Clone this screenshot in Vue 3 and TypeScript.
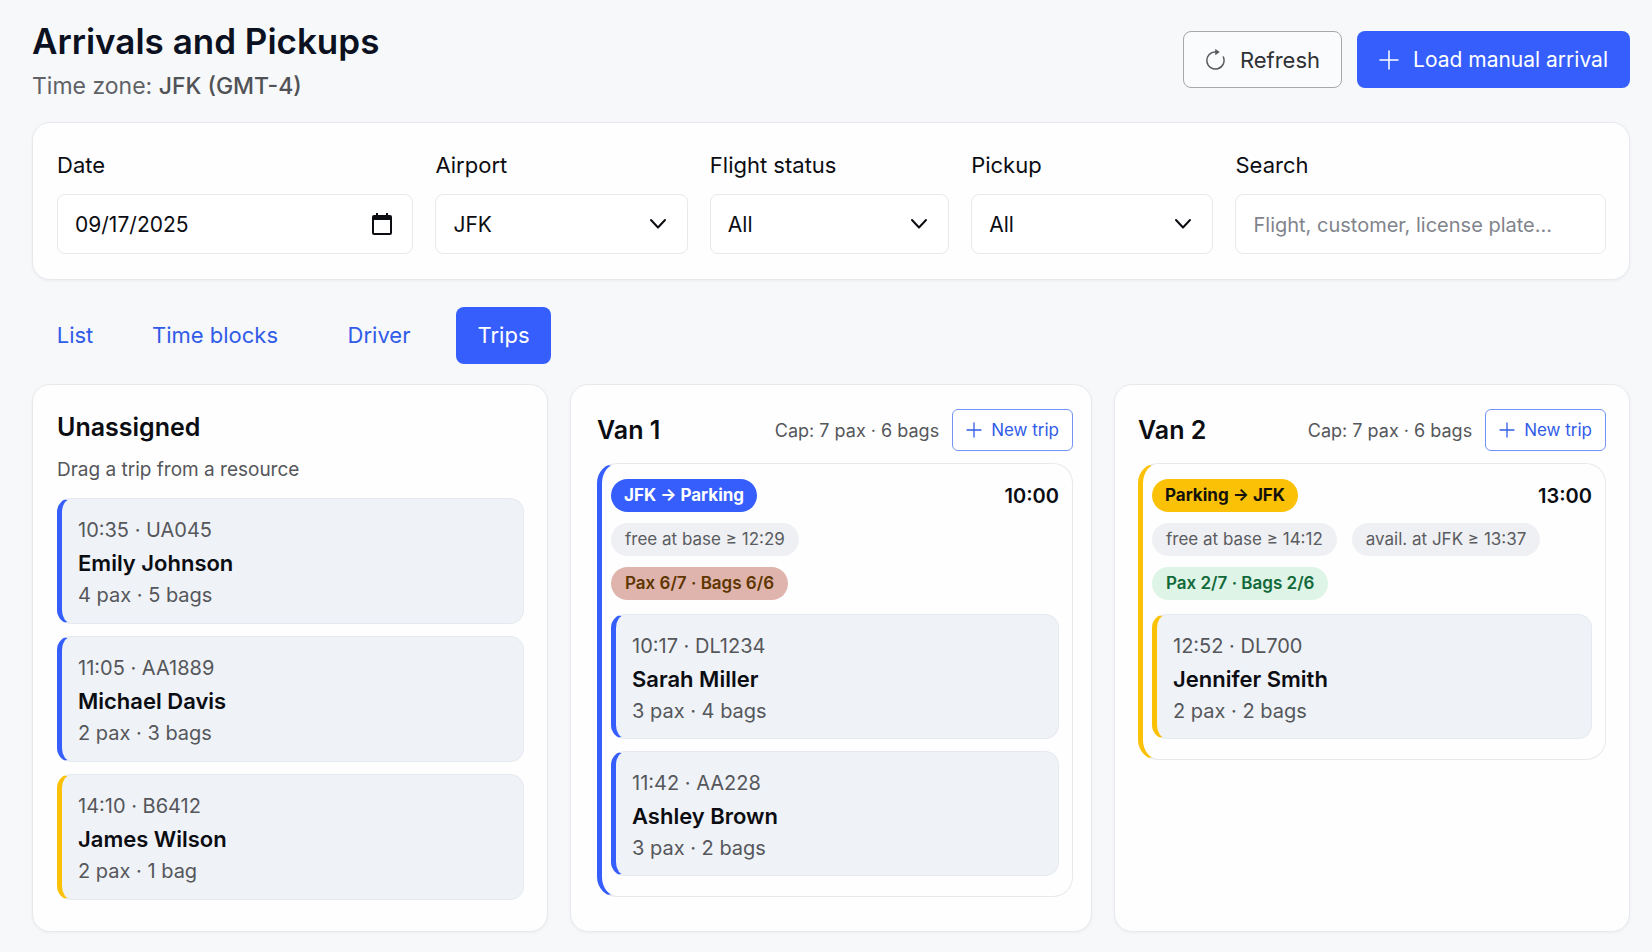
<script setup lang="ts">
import { ref } from 'vue'

type Direction = 'arrival' | 'return'

interface Booking {
  time: string
  flight: string
  customer: string
  pax: number
  bags: number
  direction: Direction
}

interface Trip {
  id: string
  direction: Direction
  route: string
  departs: string
  notes: string[]
  load: string
  full: boolean
  bookings: Booking[]
}

interface Van {
  name: string
  capacity: string
  trips: Trip[]
}

const date = ref('2025-09-17')
const airport = ref('JFK')
const flightStatus = ref('All')
const pickup = ref('All')
const search = ref('')

const tabs = ['List', 'Time blocks', 'Driver', 'Trips']
const activeTab = ref('Trips')

const unassigned: Booking[] = [
  { time: '10:35', flight: 'UA045', customer: 'Emily Johnson', pax: 4, bags: 5, direction: 'arrival' },
  { time: '11:05', flight: 'AA1889', customer: 'Michael Davis', pax: 2, bags: 3, direction: 'arrival' },
  { time: '14:10', flight: 'B6412', customer: 'James Wilson', pax: 2, bags: 1, direction: 'return' },
]

const vans: Van[] = [
  {
    name: 'Van 1',
    capacity: 'Cap: 7 pax · 6 bags',
    trips: [
      {
        id: 'van1-1000',
        direction: 'arrival',
        route: 'JFK → Parking',
        departs: '10:00',
        notes: ['free at base ≥ 12:29'],
        load: 'Pax 6/7 · Bags 6/6',
        full: true,
        bookings: [
          { time: '10:17', flight: 'DL1234', customer: 'Sarah Miller', pax: 3, bags: 4, direction: 'arrival' },
          { time: '11:42', flight: 'AA228', customer: 'Ashley Brown', pax: 3, bags: 2, direction: 'arrival' },
        ],
      },
    ],
  },
  {
    name: 'Van 2',
    capacity: 'Cap: 7 pax · 6 bags',
    trips: [
      {
        id: 'van2-1300',
        direction: 'return',
        route: 'Parking → JFK',
        departs: '13:00',
        notes: ['free at base ≥ 14:12', 'avail. at JFK ≥ 13:37'],
        load: 'Pax 2/7 · Bags 2/6',
        full: false,
        bookings: [
          { time: '12:52', flight: 'DL700', customer: 'Jennifer Smith', pax: 2, bags: 2, direction: 'return' },
        ],
      },
    ],
  },
]

const bagLabel = (n: number): string => `${n} ${n === 1 ? 'bag' : 'bags'}`
</script>

<template>
  <main class="page">
    <header class="page-header">
      <div>
        <h1>Arrivals and Pickups</h1>
        <p class="zone">Time zone: <strong>JFK (GMT-4)</strong></p>
      </div>
      <div class="actions">
        <button type="button" class="btn btn-outline">
          <svg class="icon-refresh" viewBox="0 0 22 22" aria-hidden="true">
            <path d="M19.2 8.4A9 9 0 1 1 11 3" fill="none" stroke="currentColor" stroke-width="1.5" stroke-linecap="round" />
            <path d="M11 0.4L15 3.2L11 6Z" fill="currentColor" stroke="currentColor" stroke-width="0.6" stroke-linejoin="round" />
          </svg>
          Refresh
        </button>
        <button type="button" class="btn btn-primary">
          <svg class="icon-plus" viewBox="0 0 20 20" aria-hidden="true">
            <path d="M10 1V19M1 10H19" fill="none" stroke="currentColor" stroke-width="1.5" stroke-linecap="round" />
          </svg>
          Load manual arrival
        </button>
      </div>
    </header>

    <form class="card filters" @submit.prevent>
      <div class="field">
        <label for="filter-date">Date</label>
        <div class="control">
          <input id="filter-date" v-model="date" type="date" />
          <svg class="icon-calendar" viewBox="0 0 20 22" aria-hidden="true">
            <path d="M4 0H6V2H14V0H16V2H18A2 2 0 0 1 20 4V20A2 2 0 0 1 18 22H2A2 2 0 0 1 0 20V4A2 2 0 0 1 2 2H4ZM2 7V20H18V7Z" fill="currentColor" fill-rule="evenodd" />
          </svg>
        </div>
      </div>
      <div class="field">
        <label for="filter-airport">Airport</label>
        <div class="control">
          <select id="filter-airport" v-model="airport">
            <option>JFK</option>
          </select>
          <svg class="icon-chevron" viewBox="0 0 18 12" aria-hidden="true"><path d="M2 2L9 9.5L16 2" /></svg>
        </div>
      </div>
      <div class="field">
        <label for="filter-status">Flight status</label>
        <div class="control">
          <select id="filter-status" v-model="flightStatus">
            <option>All</option>
          </select>
          <svg class="icon-chevron" viewBox="0 0 18 12" aria-hidden="true"><path d="M2 2L9 9.5L16 2" /></svg>
        </div>
      </div>
      <div class="field">
        <label for="filter-pickup">Pickup</label>
        <div class="control">
          <select id="filter-pickup" v-model="pickup">
            <option>All</option>
          </select>
          <svg class="icon-chevron" viewBox="0 0 18 12" aria-hidden="true"><path d="M2 2L9 9.5L16 2" /></svg>
        </div>
      </div>
      <div class="field">
        <label for="filter-search">Search</label>
        <div class="control">
          <input id="filter-search" v-model="search" type="text" placeholder="Flight, customer, license plate..." />
        </div>
      </div>
    </form>

    <nav class="tabs" aria-label="Views">
      <button
        v-for="tab in tabs"
        :key="tab"
        type="button"
        class="tab"
        :class="{ active: tab === activeTab }"
        @click="activeTab = tab"
      >{{ tab }}</button>
    </nav>

    <div class="board">
      <section class="card column">
        <h2>Unassigned</h2>
        <p class="hint">Drag a trip from a resource</p>
        <div class="bookings">
          <article v-for="b in unassigned" :key="b.flight" class="booking" :class="b.direction">
            <p>{{ b.time }} · {{ b.flight }}</p>
            <h3>{{ b.customer }}</h3>
            <p>{{ b.pax }} pax · {{ bagLabel(b.bags) }}</p>
          </article>
        </div>
      </section>

      <section v-for="van in vans" :key="van.name" class="card column van">
        <div class="van-header">
          <h2>{{ van.name }}</h2>
          <span class="capacity">{{ van.capacity }}</span>
          <button type="button" class="btn-small">
            <svg class="icon-plus-small" viewBox="0 0 16 16" aria-hidden="true">
              <path d="M8 1V15M1 8H15" fill="none" stroke="currentColor" stroke-width="1.3" stroke-linecap="round" />
            </svg>
            New trip
          </button>
        </div>
        <article v-for="trip in van.trips" :key="trip.id" class="trip" :class="trip.direction">
          <div class="trip-row spread">
            <span class="pill route" :class="trip.direction">{{ trip.route }}</span>
            <time class="departs">{{ trip.departs }}</time>
          </div>
          <div class="trip-row">
            <span v-for="note in trip.notes" :key="note" class="pill note">{{ note }}</span>
          </div>
          <div class="trip-row">
            <span class="pill load" :class="{ full: trip.full }">{{ trip.load }}</span>
          </div>
          <div class="bookings">
            <div v-for="b in trip.bookings" :key="b.flight" class="booking" :class="b.direction">
              <p>{{ b.time }} · {{ b.flight }}</p>
              <h3>{{ b.customer }}</h3>
              <p>{{ b.pax }} pax · {{ bagLabel(b.bags) }}</p>
            </div>
          </div>
        </article>
      </section>
    </div>
  </main>
</template>

<style>
body {
  margin: 0;
  background: #f7f8fa;
}
</style>

<style scoped>
.page {
  --blue: #355efc;
  --yellow: #fbc107;
  --line: #e7e9ec;
  padding: 20px 22px 20px 32px;
  font-family: Inter, "Liberation Sans", sans-serif;
  font-size: 22px;
  color: #0b0d12;
}

h1, h2, h3, p {
  margin: 0;
}

button, input, select {
  font: inherit;
  box-sizing: border-box;
}

button {
  cursor: pointer;
}

.page-header {
  display: flex;
  justify-content: space-between;
  height: 102px;
}

h1 {
  font-size: 35px;
  font-weight: 600;
  line-height: 42px;
  color: #0b1120;
}

.zone {
  font-size: 23px;
  line-height: 48px;
  color: #606266;
}

.zone strong {
  font-weight: 500;
  color: #505256;
}

.actions {
  display: flex;
  gap: 15px;
  margin-top: 11px;
}

.btn {
  display: flex;
  align-items: center;
  height: 57px;
  padding: 0 21px;
  border: 1px solid transparent;
  border-radius: 8px;
}

.btn-outline {
  gap: 14px;
  border-color: #a5a7ab;
  background: #fafbfc;
  color: #2f3135;
}

.btn-primary {
  gap: 14px;
  background: var(--blue);
  color: #fff;
  font-size: 21px;
}

.icon-refresh {
  width: 21px;
  height: 21px;
  color: #55575b;
}

.icon-plus {
  width: 20px;
  height: 20px;
}

.card {
  box-sizing: border-box;
  border: 1px solid var(--line);
  border-radius: 18px;
  background: #fefefe;
  box-shadow: 0 1px 3px rgba(20, 30, 50, 0.05);
}

.filters {
  display: grid;
  grid-template-columns: 356fr 252fr 239fr 242fr 370fr;
  gap: 22px;
  padding: 24px 23px 25px 24px;
}

.field label {
  display: block;
  margin-bottom: 11px;
  line-height: 36px;
}

.control {
  position: relative;
}

.control input,
.control select {
  display: block;
  width: 100%;
  height: 60px;
  padding: 0 17px;
  border: 1px solid var(--line);
  border-radius: 8px;
  background: #fff;
  color: #0b0d12;
  font-size: 21px;
  appearance: none;
}

.control input::placeholder {
  color: #81848c;
  font-size: 20px;
  opacity: 1;
}

.control input::-webkit-calendar-picker-indicator {
  opacity: 0;
}

.control input::-webkit-datetime-edit,
.control input::-webkit-datetime-edit-fields-wrapper,
.control input::-webkit-datetime-edit-month-field,
.control input::-webkit-datetime-edit-day-field,
.control input::-webkit-datetime-edit-year-field {
  padding: 0;
}

.icon-calendar,
.icon-chevron {
  position: absolute;
  top: 0;
  bottom: 0;
  right: 21px;
  margin: auto 0;
  pointer-events: none;
}

.icon-calendar {
  width: 20px;
  height: 22px;
}

.icon-chevron {
  width: 18px;
  height: 12px;
  fill: none;
  stroke: #0b0d12;
  stroke-width: 2;
  stroke-linecap: round;
  stroke-linejoin: round;
}

.tabs {
  display: grid;
  grid-template-columns: 82px 174px 130px 95px;
  gap: 12px;
  margin: 27px 0 20px 2px;
}

.tab {
  height: 57px;
  padding: 0 0 2px;
  border: 0;
  border-radius: 8px;
  background: none;
  color: #315ce8;
}

.tab.active {
  background: var(--blue);
  color: #fff;
}

.board {
  display: grid;
  grid-template-columns: 516fr 522fr 516fr;
  gap: 22px;
}

.column {
  padding: 24px 23px 31px 24px;
}

.van {
  padding-left: 26px;
  padding-right: 18px;
}

.van + .van {
  padding-left: 23px;
  padding-right: 23px;
}

h2 {
  font-size: 25px;
  font-weight: 600;
  line-height: 36px;
}

.hint {
  margin: 11px 0 14px;
  font-size: 19px;
  line-height: 28px;
  color: #55575b;
}

.bookings {
  display: grid;
  gap: 12px;
}

.booking {
  padding: 16px 16px 12px;
  border: 1px solid #e6eaf0;
  border-left: 5px solid var(--blue);
  border-radius: 14px;
  background: #eff2f7;
}

.trip .bookings {
  margin-top: 3px;
}

.trip .booking {
  padding-bottom: 11px;
}

.booking p {
  font-size: 20px;
  line-height: 31px;
  color: #55575b;
}

.booking h3 {
  font-size: 22px;
  font-weight: 600;
  line-height: 34px;
}

.booking.return,
.trip.return {
  border-left-color: var(--yellow);
}

.van-header {
  display: flex;
  align-items: center;
  gap: 13px;
  margin-bottom: 12px;
}

.van-header h2 {
  flex: 1;
}

.capacity {
  font-size: 18px;
  color: #55575b;
}

.btn-small {
  display: flex;
  align-items: center;
  gap: 9px;
  height: 42px;
  padding: 0 13px;
  border: 1px solid #7393f5;
  border-radius: 6px;
  background: #fff;
  color: #315ce8;
  font-size: 17px;
}

.icon-plus-small {
  width: 16px;
  height: 16px;
}

.trip {
  display: grid;
  gap: 11px;
  padding: 15px 13px 20px 9px;
  border: 1px solid var(--line);
  border-left: 5px solid var(--blue);
  border-radius: 20px;
}

.trip-row {
  display: flex;
  align-items: center;
  gap: 15px;
}

.spread {
  justify-content: space-between;
}

.pill {
  padding: 0 14px;
  border-radius: 17px;
  font-size: 17px;
  line-height: 33px;
  white-space: nowrap;
}

.route {
  padding: 0 13px;
  font-weight: 700;
}

.route.arrival {
  background: var(--blue);
  color: #fff;
}

.route.return {
  background: var(--yellow);
  color: #14120a;
}

.departs {
  font-size: 20px;
  font-weight: 600;
}

.note {
  background: #eff0f3;
  color: #5a5c61;
}

.load {
  background: #ddf4e6;
  color: #11693a;
  font-weight: 600;
}

.load.full {
  background: #deb4ac;
  color: #5f3500;
}
</style>
